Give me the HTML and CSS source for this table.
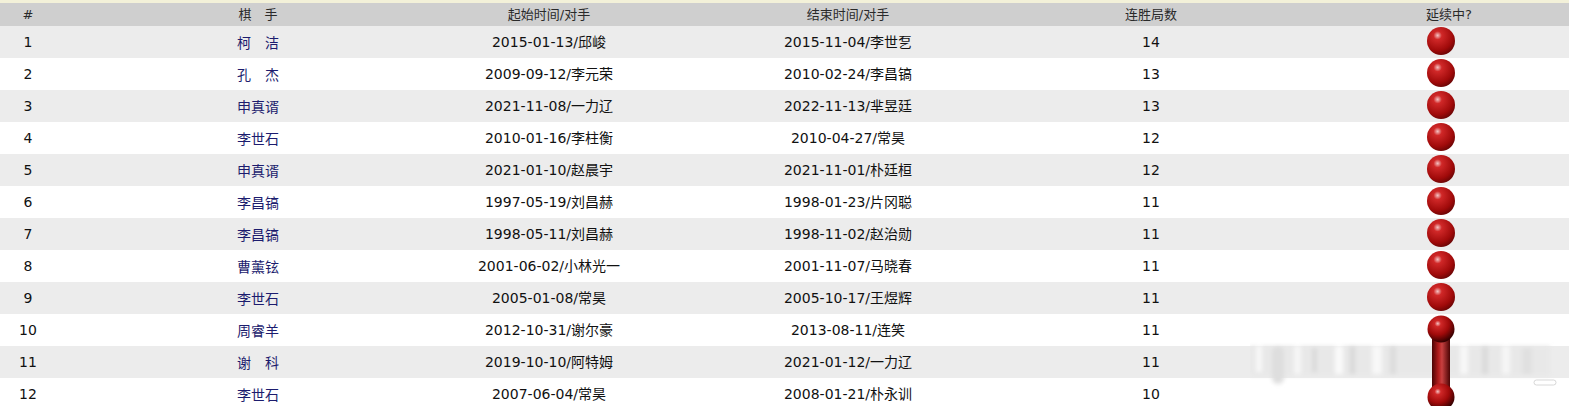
FILE: index.html
```html
<!DOCTYPE html>
<html>
<head>
<meta charset="utf-8">
<link rel="stylesheet" href="styles.css">
</head>
<body>
<div class="topline"></div>
<table class="streaks">
  <colgroup>
    <col class="c1"><col class="c2"><col class="c3"><col class="c4"><col class="c5"><col class="c6">
  </colgroup>
  <thead>
    <tr><th>#</th><th>棋　手</th><th>起始时间/对手</th><th>结束时间/对手</th><th>连胜局数</th><th class="left">延续中?</th></tr>
  </thead>
  <tbody>
    <tr><td>1</td><td class="name">柯　洁</td><td>2015-01-13/邱峻</td><td>2015-11-04/李世乭</td><td>14</td><td class="left"><span class="ball"></span></td></tr>
    <tr><td>2</td><td class="name">孔　杰</td><td>2009-09-12/李元荣</td><td>2010-02-24/李昌镐</td><td>13</td><td class="left"><span class="ball"></span></td></tr>
    <tr><td>3</td><td class="name">申真谞</td><td>2021-11-08/一力辽</td><td>2022-11-13/芈昱廷</td><td>13</td><td class="left"><span class="ball"></span></td></tr>
    <tr><td>4</td><td class="name">李世石</td><td>2010-01-16/李柱衡</td><td>2010-04-27/常昊</td><td>12</td><td class="left"><span class="ball"></span></td></tr>
    <tr><td>5</td><td class="name">申真谞</td><td>2021-01-10/赵晨宇</td><td>2021-11-01/朴廷桓</td><td>12</td><td class="left"><span class="ball"></span></td></tr>
    <tr><td>6</td><td class="name">李昌镐</td><td>1997-05-19/刘昌赫</td><td>1998-01-23/片冈聪</td><td>11</td><td class="left"><span class="ball"></span></td></tr>
    <tr><td>7</td><td class="name">李昌镐</td><td>1998-05-11/刘昌赫</td><td>1998-11-02/赵治勋</td><td>11</td><td class="left"><span class="ball"></span></td></tr>
    <tr><td>8</td><td class="name">曹薰铉</td><td>2001-06-02/小林光一</td><td>2001-11-07/马晓春</td><td>11</td><td class="left"><span class="ball"></span></td></tr>
    <tr><td>9</td><td class="name">李世石</td><td>2005-01-08/常昊</td><td>2005-10-17/王煜辉</td><td>11</td><td class="left"><span class="ball"></span></td></tr>
    <tr><td>10</td><td class="name">周睿羊</td><td>2012-10-31/谢尔豪</td><td>2013-08-11/连笑</td><td>11</td><td class="left"></td></tr>
    <tr><td>11</td><td class="name">谢　科</td><td>2019-10-10/阿特姆</td><td>2021-01-12/一力辽</td><td>11</td><td class="left"></td></tr>
    <tr><td>12</td><td class="name">李世石</td><td>2007-06-04/常昊</td><td>2008-01-21/朴永训</td><td>10</td><td class="left"></td></tr>
  </tbody>
</table>

<svg class="watermark" width="310" height="50" viewBox="0 0 310 50">
  <defs>
    <filter id="blur" x="-20%" y="-20%" width="140%" height="140%"><feGaussianBlur stdDeviation="2.2"/></filter>
  </defs>
  <g filter="url(#blur)">
    <rect x="0" y="4" width="300" height="30" fill="#e8e8e8"/>
    <rect x="6" y="4" width="6" height="26" fill="#f8f8f8"/>
    <rect x="22" y="4" width="12" height="38" rx="6" fill="#dedede"/>
    <rect x="44" y="4" width="7" height="28" fill="#f6f6f6"/>
    <rect x="62" y="6" width="5" height="24" fill="#dadada"/>
    <rect x="85" y="4" width="8" height="28" fill="#fafafa"/>
    <rect x="100" y="4" width="5" height="28" fill="#d8d8d8"/>
    <rect x="122" y="4" width="10" height="28" fill="#f8f8f8"/>
    <rect x="140" y="4" width="6" height="28" fill="#dcdcdc"/>
    <rect x="210" y="4" width="8" height="28" fill="#f8f8f8"/>
    <rect x="232" y="4" width="6" height="28" fill="#dadada"/>
    <rect x="252" y="4" width="8" height="28" fill="#f6f6f6"/>
    <rect x="272" y="6" width="10" height="26" fill="#e0e0e0"/>
  </g>
  <rect x="284" y="38" width="22" height="5" rx="2.5" fill="none" stroke="#d8d8d8" stroke-width="1"/>
</svg>

<svg class="bar" width="30" height="96" viewBox="0 0 30 96">
  <defs>
    <linearGradient id="barg" x1="0" y1="0" x2="1" y2="0">
      <stop offset="0" stop-color="#4a0404"/>
      <stop offset="0.35" stop-color="#b01c1c"/>
      <stop offset="0.55" stop-color="#c84040"/>
      <stop offset="1" stop-color="#4a0404"/>
    </linearGradient>
    <radialGradient id="bg2" cx="0.38" cy="0.3" r="0.72">
      <stop offset="0" stop-color="#f4c4c4"/>
      <stop offset="0.16" stop-color="#d02828"/>
      <stop offset="0.58" stop-color="#a00a0a"/>
      <stop offset="1" stop-color="#300000"/>
    </radialGradient>
  </defs>
  <rect x="6" y="14" width="18" height="70" fill="url(#barg)"/>
  <circle cx="15" cy="14" r="13.5" fill="url(#bg2)"/>
  <circle cx="15" cy="82" r="13.5" fill="url(#bg2)"/>
</svg>
</body>
</html>
```

FILE: styles.css
```css
html, body {
  margin: 0;
  padding: 0;
  background: #ffffff;
  overflow: hidden;
}
body {
  position: relative;
  width: 1569px;
  height: 406px;
  font-family: "DejaVu Sans", Tahoma, "Noto Sans CJK SC", sans-serif;
  font-size: 14px;
  color: #111111;
}
.topline {
  height: 3px;
  background: #f3f1d9;
}
.streaks {
  width: 1569px;
  border-collapse: collapse;
  border-spacing: 0;
  table-layout: fixed;
}
.c1 { width: 56px; }
.c2 { width: 404px; }
.c3 { width: 178px; }
.c4 { width: 420px; }
.c5 { width: 186px; }
.c6 { width: 325px; }
.streaks th {
  height: 23px;
  padding: 0;
  background: #cfcfcf;
  font-weight: normal;
  font-size: 13px;
  line-height: 16px;
  color: #2a2a2a;
  text-align: center;
  vertical-align: middle;
}
.streaks td {
  height: 32px;
  padding: 0;
  line-height: 18px;
  text-align: center;
  vertical-align: middle;
}
.streaks tbody tr:nth-child(odd) td {
  background: #ececec;
}
.streaks .left {
  text-align: left;
  padding-left: 182px;
}
.streaks td.left {
  vertical-align: top;
}
.name {
  color: #1c1c6e;
  font-family: "Noto Sans CJK SC", sans-serif;
}
.ball {
  display: block;
  width: 28px;
  height: 28px;
  margin-top: 1px;
  margin-left: 1px;
  border-radius: 50%;
  background: radial-gradient(circle at 38% 30%, #f4c4c4 0%, #d02828 16%, #a00a0a 58%, #300000 100%);
}
.watermark {
  position: absolute;
  left: 1250px;
  top: 342px;
}
.bar {
  position: absolute;
  left: 1426px;
  top: 315px;
}
```
